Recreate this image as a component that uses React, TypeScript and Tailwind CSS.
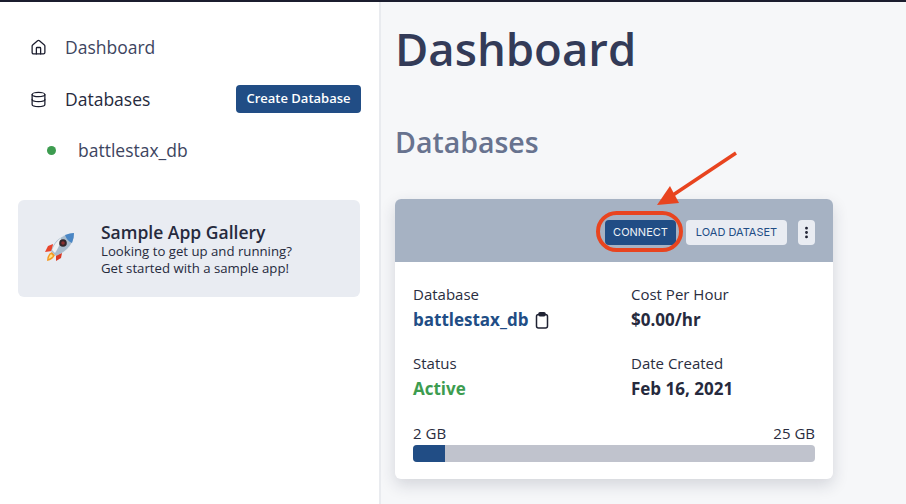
import { Database, Home, MoreVertical } from 'lucide-react';

function Rocket() {
  return (
    <svg width="30" height="30" viewBox="0 0 30 30" className="mb-[3px]">
      <path d="M8 12 L3 14 L0 20 L7 19 Z" fill="#e8452c" />
      <path d="M17 21 L16 26 L11 29 L11 23 Z" fill="#d93a26" />
      <path d="M7 20 Q2 22 2 29 Q8 28 10 23 Z" fill="#f59a23" />
      <path d="M6 22 Q4 24 3.500 27 Q6 26 8 24 Z" fill="#fde68a" />
      <path d="M6 19 Q10 4 29 1 Q29 16 11 24 Z" fill="#a9bccd" />
      <path d="M20 3 Q25 1 29 1 Q29 6 27 11 Q22 9 20 3 Z" fill="#4a86c5" />
      <path d="M7 18 Q10 10 16 6 Q15 14 10 21 Z" fill="#eef1f3" />
      <circle cx="18" cy="11" r="3.800" fill="#33262b" />
      <circle cx="18" cy="11" r="1.800" fill="#8a2f2f" />
    </svg>
  );
}

function Clipboard() {
  return (
    <svg width="14" height="17" viewBox="0 0 14 17" fill="none" stroke="#1f2233" strokeWidth="1.500">
      <rect x="1.500" y="2.500" width="11" height="13.500" rx="2" />
      <rect x="4" y="0.800" width="6" height="3" rx="1" fill="#1f2233" />
    </svg>
  );
}

function Field({ label, children }: { label: string; children: React.ReactNode }) {
  return (
    <div>
      <div className="text-[15px] leading-[20px] text-[#2a2d40]">{label}</div>
      <div className="mt-[4px] flex items-center gap-[7px] text-[17px] leading-[24px] font-bold text-[#262a3d]">
        {children}
      </div>
    </div>
  );
}

export default function App() {
  return (
    <div className="relative flex h-[504px] w-[906px] flex-col overflow-hidden bg-[#f6f7f9] font-['Open_Sans','Liberation_Sans',sans-serif]">
      <div className="h-[2px] shrink-0 bg-[#1b1d2e]" />
      <div className="flex min-h-0 flex-1">
        <aside className="w-[381px] shrink-0 border-r-2 border-[#e9ebef] bg-white pt-[32px] pr-[18px] pl-[18px]">
          <div className="flex h-[26px] items-center text-[17.500px] text-[#3d4560]">
            <Home size={17} strokeWidth={1.8} className="ml-[12px] mr-[18px] text-[#1b1d2e]" />
            Dashboard
          </div>
          <div className="mt-[19px] flex h-[40px] items-center text-[17.500px] text-[#262a3d]">
            <Database size={17} strokeWidth={1.8} className="ml-[12px] mr-[18px] text-[#1b1d2e]" />
            Databases
            <button className="ml-auto h-[28px] w-[125px] rounded-[4px] bg-[#214d85] text-[13px] font-semibold text-white">
              Create Database
            </button>
          </div>
          <div className="mt-[19px] flex h-[24px] items-center text-[17.500px] text-[#3d4560]">
            <span className="ml-[29px] mr-[22px] h-[9px] w-[9px] rounded-full bg-[#3d9c50]" />
            battlestax_db
          </div>
          <div className="mt-[38px] mr-[1px] flex h-[97px] items-center rounded-[6px] bg-[#e9ecf2] pl-[27px]">
            <Rocket />
            <div className="ml-[26px] text-[#262a3d]">
              <div className="text-[17.500px] leading-[22px] font-semibold">Sample App Gallery</div>
              <div className="text-[13.200px] leading-[17px]">Looking to get up and running?</div>
              <div className="text-[13.200px] leading-[17px]">Get started with a sample app!</div>
            </div>
          </div>
        </aside>
        <main className="min-w-0 flex-1 pl-[14px]">
          <h1 className="mt-[18px] text-[45.500px] leading-[56px] font-semibold text-[#333b58]">Dashboard</h1>
          <h2 className="mt-[48px] text-[28.500px] leading-[36px] font-semibold text-[#68738f]">Databases</h2>
          <section className="mt-[39px] h-[280px] w-[438px] overflow-hidden rounded-[6px] bg-white shadow-[0_6px_16px_rgba(30,40,60,0.16)]">
            <div className="flex h-[63px] items-center justify-end bg-[#a6b2c3] pt-[4px] pr-[18px] font-['Inter',sans-serif] text-[11px] font-normal">
              <button className="h-[25px] w-[71px] rounded-[4px] bg-[#214d85] text-[#eef2f7]">CONNECT</button>
              <button className="ml-[10px] h-[25px] w-[101px] rounded-[4px] bg-[#e9ecf2] text-[#214d85]">LOAD DATASET</button>
              <button className="ml-[11px] flex h-[25px] w-[17px] items-center justify-center rounded-[4px] bg-[#e9ecf2] text-[#1b1d2e]">
                <MoreVertical size={15} strokeWidth={2.5} />
              </button>
            </div>
            <div className="px-[18px] pt-[22px]">
              <div className="grid grid-cols-[218px_1fr] gap-y-[21px]">
                <Field label="Database">
                  <span className="text-[#214d85]">battlestax_db</span>
                  <Clipboard />
                </Field>
                <Field label="Cost Per Hour">$0.00/hr</Field>
                <Field label="Status">
                  <span className="text-[#3d9c50]">Active</span>
                </Field>
                <Field label="Date Created">Feb 16, 2021</Field>
              </div>
              <div className="mt-[22px] flex justify-between text-[15px] leading-[20px] text-[#2a2d40]">
                <span>2 GB</span>
                <span>25 GB</span>
              </div>
              <div className="mt-[2px] h-[17px] overflow-hidden rounded-[4px] bg-[#c0c3cd]">
                <div className="h-full w-[8%] bg-[#214d85]" />
              </div>
            </div>
          </section>
        </main>
      </div>
      {/* red annotation over the connect button */}
      <div className="absolute top-[211px] left-[596px] h-[41px] w-[87px] rounded-[21px] border-4 border-[#e8441f]" />
      <svg className="absolute top-[150px] left-[655px]" width="85" height="60" viewBox="0 0 85 60">
        <path d="M81 3 L18 45" stroke="#e8441f" strokeWidth="3.500" />
        <path d="M2 55 L15 36 L24 53 Z" fill="#e8441f" />
      </svg>
    </div>
  );
}
